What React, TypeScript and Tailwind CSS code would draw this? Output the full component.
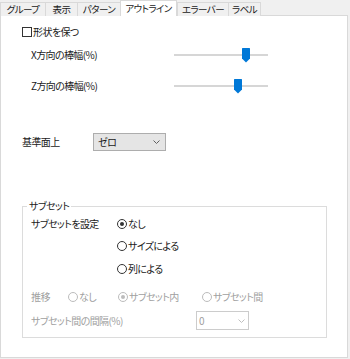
import React from 'react';

const Tab: React.FC<{ label: string; w: string; active?: boolean; last?: boolean }> = ({ label, w, active, last }) => (
    <div
        className={
            active
                ? `${w} relative z-10 h-[16px] bg-white border-l border-r border-t border-[#d9d9d9] text-center text-[9.5px] leading-[15px] whitespace-nowrap`
                : `${w} h-[14px] bg-[#f0f0f0] border-t border-l border-[#d9d9d9] ${last ? 'border-r' : ''} text-center text-[9.5px] leading-[13px] whitespace-nowrap`
        }
    >
        {label}
    </div>
);

const Slider: React.FC<{ thumb: string }> = ({ thumb }) => (
    <div className="relative w-[94px] h-[16px]">
        <div className="absolute left-0 right-0 top-[7px] h-[2px] bg-[#d6d6d6]" />
        <svg className={`absolute top-[1px] ${thumb}`} width="8" height="15" viewBox="0 0 8 15">
            <path d="M0 0.5 Q0 0 0.5 0 H7.5 Q8 0 8 0.5 V10.5 L4 14.5 L0 10.5 Z" fill="#0078d7" />
        </svg>
    </div>
);

const Chevron: React.FC<{ color: string }> = ({ color }) => (
    <svg width="7" height="4" viewBox="0 0 7 4">
        <polyline points="0.5,0.5 3.5,3.5 6.5,0.5" fill="none" stroke={color} strokeWidth="1" />
    </svg>
);

const Radio: React.FC<{ label: string; checked?: boolean; disabled?: boolean; w?: string }> = ({ label, checked, disabled, w = '' }) => (
    <div className={`flex items-center ${w}`}>
        <span
            className={`flex items-center justify-center w-[10px] h-[10px] rounded-full border bg-white ${
                disabled ? 'border-[#bcbcbc]' : 'border-[#333333]'
            }`}
        >
            {checked && <span className={`w-[4px] h-[4px] rounded-full ${disabled ? 'bg-[#bcbcbc]' : 'bg-[#333333]'}`} />}
        </span>
        <span className="ml-[1px] whitespace-nowrap">{label}</span>
    </div>
);

const App: React.FC = () => {
    return (
        <div className="w-[350px] h-[359px] bg-[#f0f0f0] text-[10px] leading-[16px] tracking-[-0.6px] text-[#1a1a1a] font-['Noto_Sans_CJK_JP','Noto_Sans',sans-serif] [font-feature-settings:'palt'] overflow-hidden">
            {/* Tabs */}
            <div className="flex items-end h-[16px]">
                <Tab label="グループ" w="w-[45px]" />
                <Tab label="表示" w="w-[32px]" />
                <Tab label="パターン" w="w-[43px]" />
                <Tab label="アウトライン" w="w-[57px]" active />
                <Tab label="エラーバー" w="w-[51px]" />
                <Tab label="ラベル" w="w-[33px]" last />
            </div>

            {/* Panel */}
            <div className="-mt-px w-[348px] h-[343px] bg-white border border-[#d9d9d9] pl-[21px]">
                <div className="mt-[8px] flex items-center h-[16px]">
                    <span className="w-[10px] h-[10px] border border-[#333333] bg-white" />
                    <span className="ml-[1px]">形状を保つ</span>
                </div>

                <div className="mt-[7px] flex items-center h-[16px]">
                    <span className="ml-[9px] w-[143px]">X方向の棒幅(%)</span>
                    <Slider thumb="left-[68px]" />
                </div>

                <div className="mt-[15px] flex items-center h-[16px]">
                    <span className="ml-[9px] w-[143px]">Z方向の棒幅(%)</span>
                    <Slider thumb="left-[60px]" />
                </div>

                <div className="mt-[39px] flex items-center h-[18px]">
                    <span className="w-[71px]">基準面上</span>
                    <div className="flex items-center justify-between w-[73px] h-[18px] bg-[#e5e5e5] border border-[#adadad] pl-[4px] pr-[5px]">
                        <span>ゼロ</span>
                        <Chevron color="#606060" />
                    </div>
                </div>

                {/* Subset group */}
                <fieldset className="mt-[48px] w-[305px] h-[139px] border border-[#dcdcdc]">
                    <legend className="ml-[4px] px-[2px] leading-[14px]">サブセット</legend>
                    <div className="pl-[8px]">
                        <div className="mt-[3px] flex items-center h-[16px]">
                            <span className="w-[86px]">サブセットを設定</span>
                            <Radio label="なし" checked />
                        </div>
                        <div className="mt-[6px] flex items-center h-[16px] pl-[86px]">
                            <Radio label="サイズによる" />
                        </div>
                        <div className="mt-[7px] flex items-center h-[16px] pl-[86px]">
                            <Radio label="列による" />
                        </div>

                        <div className="mt-[12px] flex items-center h-[16px] text-[#a0a0a0]">
                            <span className="w-[37px]">推移</span>
                            <Radio label="なし" disabled w="w-[50px]" />
                            <Radio label="サブセット内" checked disabled w="w-[84px]" />
                            <Radio label="サブセット間" disabled />
                        </div>

                        <div className="mt-[6px] flex items-center h-[19px] text-[#a0a0a0]">
                            <span className="w-[165px]">サブセット間の間隔(%)</span>
                            <div className="flex items-center justify-between w-[53px] h-[19px] bg-white border border-[#cccccc] pl-[2px] pr-[3px]">
                                <span>0</span>
                                <Chevron color="#bfbfbf" />
                            </div>
                        </div>
                    </div>
                </fieldset>
            </div>
        </div>
    );
};

export default App;
